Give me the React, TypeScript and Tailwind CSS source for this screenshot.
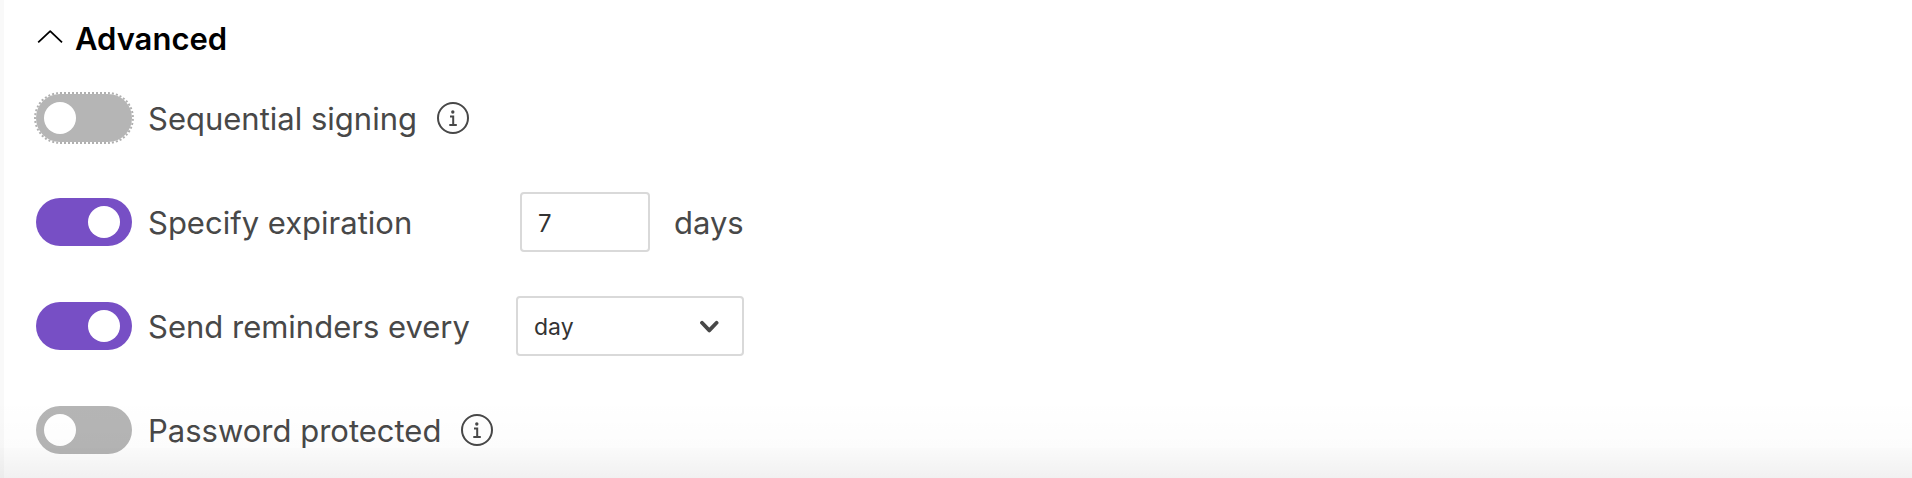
import { ReactNode, useState } from "react";

function Switch({ id, checked, onChange, focused }: {
  id: string;
  checked: boolean;
  onChange: (v: boolean) => void;
  focused?: boolean;
}) {
  return (
    <span className="grid shrink-0 items-center">
      <input
        id={id}
        type="checkbox"
        role="switch"
        checked={checked}
        onChange={(e) => onChange(e.target.checked)}
        className={`peer col-start-1 row-start-1 h-12 w-24 appearance-none rounded-full bg-[#b5b5b5] checked:bg-[#774fc5] ${
          focused ? "outline-2 outline-dotted outline-[#b0b0b0]" : "outline-none"
        }`}
      />
      <span className="pointer-events-none col-start-1 row-start-1 ml-2 size-8 rounded-full bg-white peer-checked:ml-[52px]" />
    </span>
  );
}

function InfoButton({ label }: { label: string }) {
  return (
    <button type="button" aria-label={label} className="ml-5 text-[#484848]">
      <svg viewBox="0 0 32 32" className="size-8" fill="none" stroke="currentColor" strokeWidth="2">
        <circle cx="16" cy="16" r="15" />
        <path d="M13 14.6h3.2v8.4M12.3 23h7.5" />
        <circle cx="15.8" cy="10" r="1.7" fill="currentColor" stroke="none" />
      </svg>
    </button>
  );
}

function OptionRow({ children }: { children: ReactNode }) {
  return <div className="flex h-[60px] items-center">{children}</div>;
}

export default function App() {
  const [open, setOpen] = useState(true);
  const [sequential, setSequential] = useState(false);
  const [expires, setExpires] = useState(true);
  const [days, setDays] = useState("7");
  const [reminders, setReminders] = useState(true);
  const [every, setEvery] = useState("day");
  const [password, setPassword] = useState(false);

  return (
    <div className="relative min-h-screen border-l-4 border-[#f9f9f9] bg-white px-8 pt-[18px] pb-[18px] font-['Inter',sans-serif] text-[31px] text-[#484848]">
      <h2 className="text-[31px] font-semibold text-black">
        <button type="button" aria-expanded={open} onClick={() => setOpen(!open)} className="flex h-10 items-center gap-[11px]">
          <svg viewBox="0 0 28 16" className={`h-4 w-7 ${open ? "" : "rotate-180"}`} fill="none" stroke="currentColor" strokeWidth="1.8">
            <path d="M2.2 12.3 14.2 1.2l11.8 11.1" strokeLinejoin="round" />
          </svg>
          <span className="pt-0.5">Advanced</span>
        </button>
      </h2>

      {open && (
        <div className="mt-[30px] flex flex-col gap-11">
          <OptionRow>
            <Switch id="sequential" checked={sequential} onChange={setSequential} focused />
            <label htmlFor="sequential" className="pt-0.5 pl-4">Sequential signing</label>
            <InfoButton label="About sequential signing" />
          </OptionRow>

          <OptionRow>
            <Switch id="expiration" checked={expires} onChange={setExpires} />
            <label htmlFor="expiration" className="w-[388px] pt-0.5 pl-4">Specify expiration</label>
            <input
              id="days"
              type="text"
              inputMode="numeric"
              value={days}
              onChange={(e) => setDays(e.target.value)}
              className="h-[60px] w-[130px] rounded-sm border-2 border-[#d9d9d9] bg-white px-4 pt-0.5 text-[24px] text-[#333] outline-none"
            />
            <label htmlFor="days" className="pt-0.5 pl-6">days</label>
          </OptionRow>

          <OptionRow>
            <Switch id="reminders" checked={reminders} onChange={setReminders} />
            <label htmlFor="reminders" className="w-[384px] pt-0.5 pl-4">Send reminders every</label>
            <div className="grid items-center">
              <select
                aria-label="Reminder interval"
                value={every}
                onChange={(e) => setEvery(e.target.value)}
                className="col-start-1 row-start-1 h-[60px] w-[228px] appearance-none rounded-sm border-2 border-[#d9d9d9] bg-white px-4 pt-0.5 text-[23px] text-[#333] outline-none"
              >
                <option value="day">day</option>
                <option value="week">week</option>
                <option value="month">month</option>
              </select>
              <svg viewBox="0 0 20 14" className="pointer-events-none col-start-1 row-start-1 mr-6 h-[14px] w-5 justify-self-end" fill="none" stroke="#484848" strokeWidth="3.8" strokeLinecap="round" strokeLinejoin="round">
                <path d="M2 3.8 9.3 11.4l7.3-7.6" />
              </svg>
            </div>
          </OptionRow>

          <OptionRow>
            <Switch id="password" checked={password} onChange={setPassword} />
            <label htmlFor="password" className="pt-0.5 pl-4">Password protected</label>
            <InfoButton label="About password protection" />
          </OptionRow>
        </div>
      )}

      {/* scroll shade over the bottom edge */}
      <div className="pointer-events-none absolute right-0 bottom-0 -left-1 h-20 bg-[linear-gradient(to_bottom,rgba(0,0,0,0)_0%,rgba(0,0,0,0.012)_62%,rgba(0,0,0,0.02)_63%,rgba(0,0,0,0.055)_100%)]" />
    </div>
  );
}
